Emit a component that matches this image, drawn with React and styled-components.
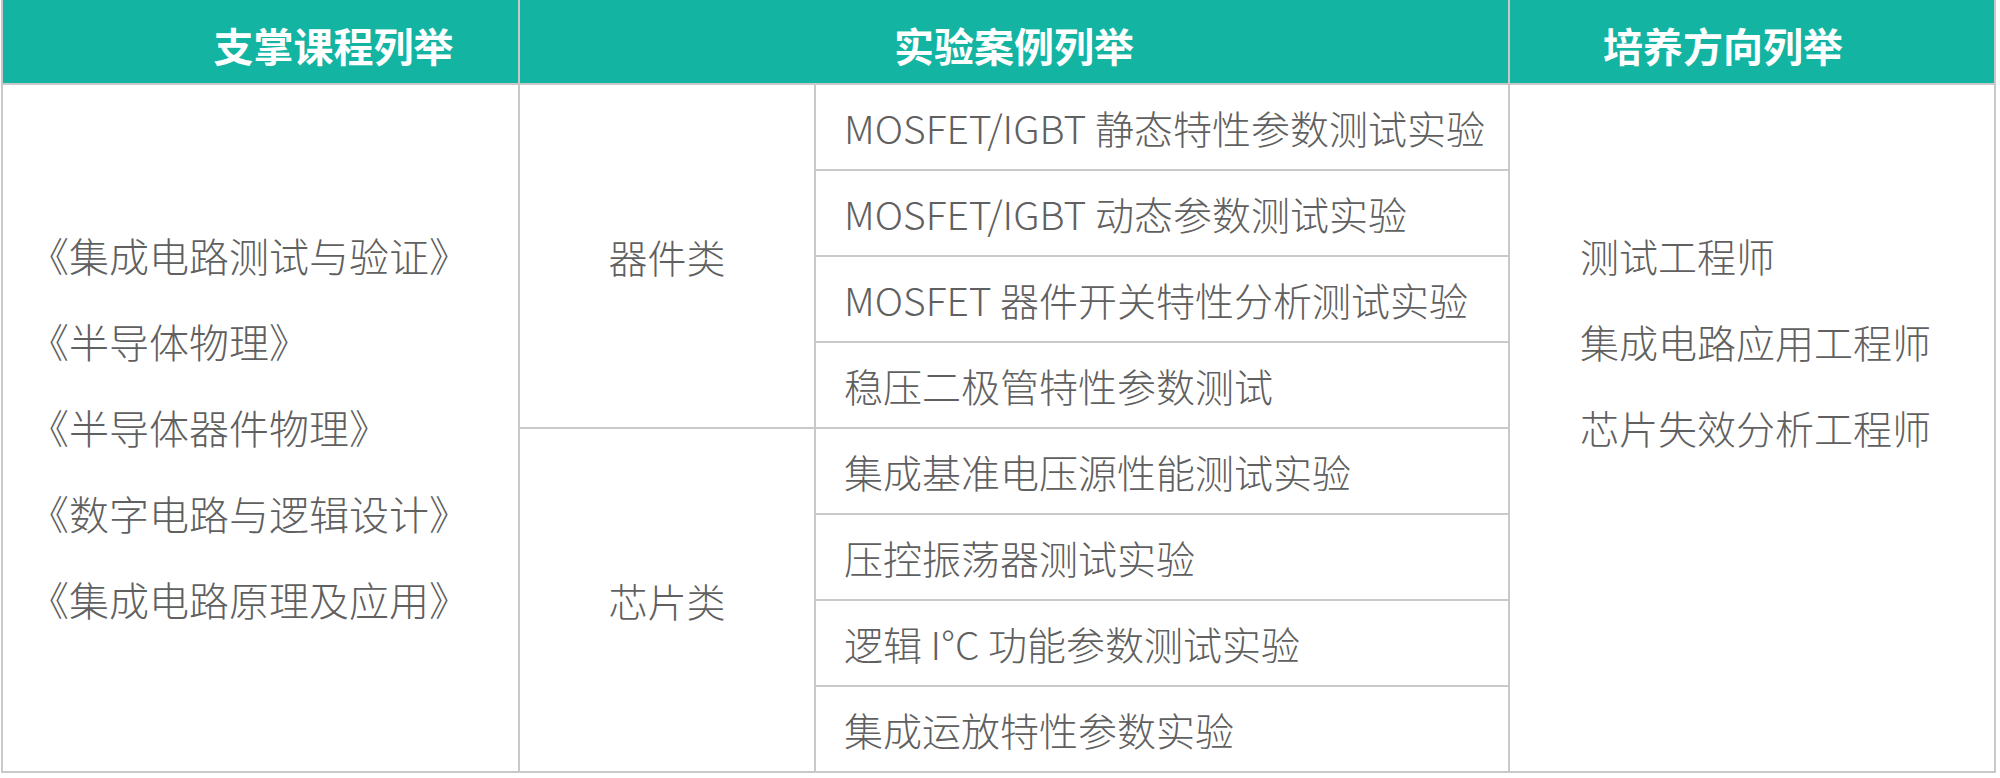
import React from 'react'
import styled, { createGlobalStyle } from 'styled-components'

const GlobalStyle = createGlobalStyle`
  body {
    margin: 0;
    background: #ffffff;
    font-family: "Noto Sans CJK SC", "Noto Sans", sans-serif;
  }
`

const courses = [
  '《集成电路测试与验证》',
  '《半导体物理》',
  '《半导体器件物理》',
  '《数字电路与逻辑设计》',
  '《集成电路原理及应用》',
]

const groups = [
  {
    name: '器件类',
    items: [
      'MOSFET/IGBT 静态特性参数测试实验',
      'MOSFET/IGBT 动态参数测试实验',
      'MOSFET 器件开关特性分析测试实验',
      '稳压二极管特性参数测试',
    ],
  },
  {
    name: '芯片类',
    items: [
      '集成基准电压源性能测试实验',
      '压控振荡器测试实验',
      '逻辑 I°C 功能参数测试实验',
      '集成运放特性参数实验',
    ],
  },
]

const careers = ['测试工程师', '集成电路应用工程师', '芯片失效分析工程师']

export default function App() {
  let row = 2
  return (
    <>
      <GlobalStyle />
      <Page>
        <Table>
          <HeadCell col="1" shift={146}>支掌课程列举</HeadCell>
          <HeadCell col="2 / span 2">实验案例列举</HeadCell>
          <HeadCell col="4" shift={-58}>培养方向列举</HeadCell>

          <ListCell col="1" pad={26} size={40}>
            {courses.map((c) => (
              <Line key={c}>{c}</Line>
            ))}
          </ListCell>

          {groups.map((g) => {
            const start = row
            row += g.items.length
            return (
              <React.Fragment key={g.name}>
                <GroupCell style={{ gridRow: `${start} / span ${g.items.length}` }}>
                  {g.name}
                </GroupCell>
                {g.items.map((it, i) => (
                  <ItemCell key={it} style={{ gridRow: start + i }}>
                    {it}
                  </ItemCell>
                ))}
              </React.Fragment>
            )
          })}

          <ListCell col="4" pad={70} size={39}>
            {careers.map((c) => (
              <Line key={c}>{c}</Line>
            ))}
          </ListCell>
        </Table>
      </Page>
    </>
  )
}

const Page = styled.div`
  padding: 0 4px 0 1px;
`

const Table = styled.div`
  display: grid;
  grid-template-columns: 515px 294px 692px 1fr;
  grid-template-rows: 83px repeat(8, 84px);
  gap: 2px;
  padding: 0 2px 2px 2px;
  background: #c9c9c9;
`

const HeadCell = styled.div`
  grid-column: ${(p) => p.col};
  grid-row: 1;
  background: #13b4a2;
  color: #ffffff;
  font-size: 40px;
  font-weight: 700;
  display: flex;
  align-items: center;
  justify-content: center;
  padding-top: 6px;
  padding-left: ${(p) => (p.shift > 0 ? p.shift : 0)}px;
  padding-right: ${(p) => (p.shift < 0 ? -p.shift : 0)}px;
  box-sizing: border-box;
`

const ListCell = styled.div`
  grid-column: ${(p) => p.col};
  grid-row: 2 / span 8;
  background: #ffffff;
  padding: 127px 0 0 ${(p) => p.pad}px;
  color: #606060;
  font-size: ${(p) => p.size}px;
  font-weight: 300;
`

const Line = styled.div`
  line-height: 86px;
  height: 86px;
  white-space: nowrap;
`

const GroupCell = styled.div`
  grid-column: 2;
  background: #ffffff;
  display: flex;
  align-items: center;
  justify-content: center;
  color: #606060;
  font-size: 39px;
  font-weight: 300;
`

const ItemCell = styled.div`
  grid-column: 3;
  background: #ffffff;
  display: flex;
  align-items: center;
  padding-left: 28px;
  color: #606060;
  font-size: 39px;
  font-weight: 300;
  white-space: nowrap;
`
